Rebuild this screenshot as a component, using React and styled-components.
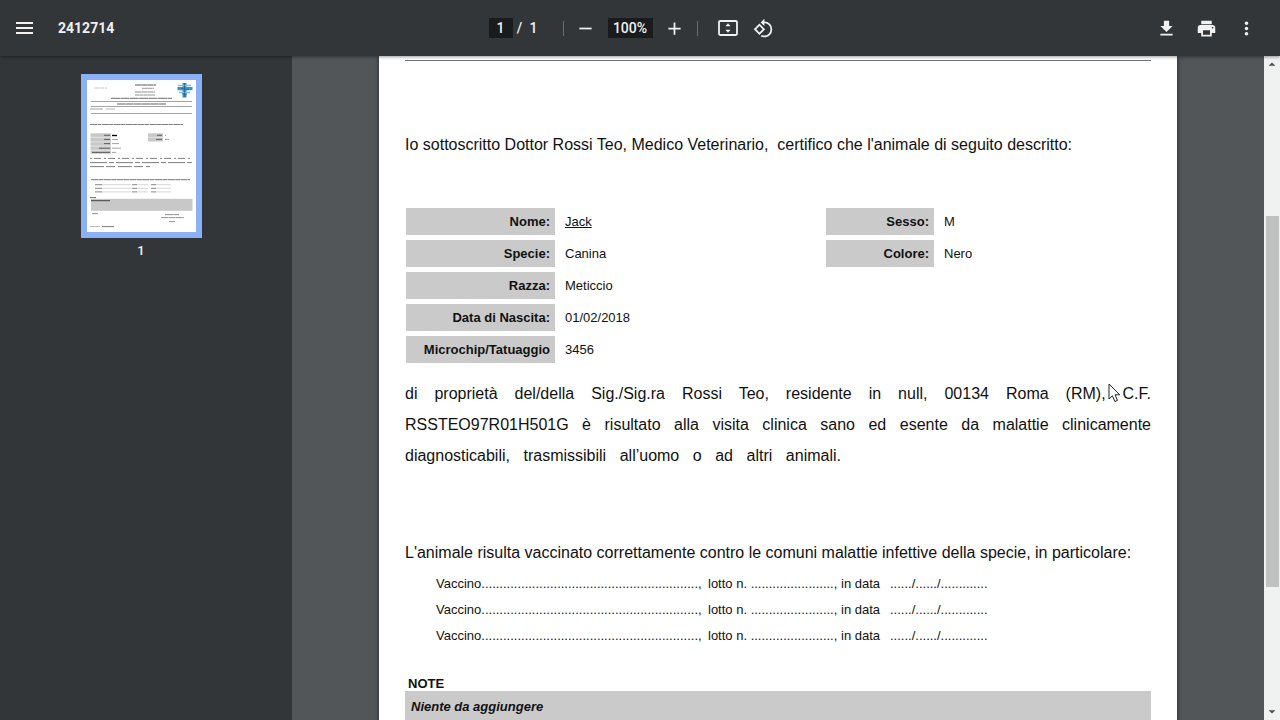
import React, {useState} from "react";
import styled, {createGlobalStyle, css} from "styled-components";
import {
    MdRemove,
    MdAdd,
    MdRotate90DegreesCcw,
    MdDownload,
    MdPrint,
    MdMoreVert,
    MdArrowDropUp,
    MdArrowDropDown,
} from "react-icons/md";

const GlobalStyle = createGlobalStyle`
  * { box-sizing: border-box; }
  body { margin: 0; background: #525659; overflow: hidden; }
`;

const Viewer = styled.div`
  display: flex;
  flex-direction: column;
  height: 100vh;
  font-family: Roboto, sans-serif;
`;

const Toolbar = styled.header`
  position: relative;
  z-index: 1;
  flex: none;
  display: grid;
  grid-template-columns: 1fr auto 1fr;
  align-items: center;
  height: 56px;
  padding: 0 18px 0 8px;
  background: #323639;
  color: #f1f1f1;
  font-size: 14px;
  font-weight: 500;
  box-shadow: 0 1px 3px rgba(0, 0, 0, 0.4);
`;

const ToolGroup = styled.div`
  display: flex;
  align-items: center;
  justify-content: ${(p) => (p.$end ? "flex-end" : "flex-start")};
  gap: ${(p) => p.$gap || 0}px;
`;

const PageTools = styled(ToolGroup)`
  padding-right: 2px;
`;

const FileName = styled.h1`
  margin: 0;
  font-size: 14px;
  font-weight: 700;
`;

const IconButton = styled.button`
  display: flex;
  align-items: center;
  justify-content: center;
  width: 32px;
  height: 32px;
  padding: 0;
  border: 0;
  background: none;
  color: inherit;
  cursor: pointer;
`;

const ToolInput = styled.input`
  width: ${(p) => p.$width}px;
  height: 20px;
  margin: ${(p) => (p.$spaced ? "0 6px" : "0")};
  padding: 0;
  border: 0;
  background: #191b1c;
  color: inherit;
  font: inherit;
  text-align: center;
`;

const PageText = styled.span`
  width: 14px;
  text-align: center;
`;

const Divider = styled.span`
  width: 1px;
  height: 15px;
  margin: ${(p) => (p.$wideLeft ? "0 6px 0 22px" : "0 14px 0 6px")};
  background: #6a6e71;
`;

const Body = styled.div`
  display: flex;
  flex: 1;
  min-height: 0;
`;

const Sidebar = styled.nav`
  flex: none;
  display: flex;
  flex-direction: column;
  align-items: center;
  width: 292px;
  padding: 18px 10px 0 0;
  background: #323639;
`;

const ThumbButton = styled.button`
  display: flex;
  flex-direction: column;
  align-items: center;
  gap: 4px;
  padding: 0;
  border: 0;
  background: none;
  color: #f1f1f1;
  font: 500 13px/18px Roboto, sans-serif;
`;

const ThumbFrame = styled.span`
  display: flex;
  border: 6px solid #8ab0f5;
  background: #fff;
`;

const Content = styled.main`
  flex: 1;
  min-width: 0;
  display: flex;
  justify-content: center;
  align-items: flex-start;
  overflow: hidden;
  background: #525659;
`;

const Sheet = styled.article`
  width: 100%;
  max-width: 798px;
  padding: 4px 26px 80px;
  background: #fff;
  color: #111;
  font-family: "Liberation Sans", Arial, sans-serif;
  font-size: 16px;
  line-height: 20px;
  box-shadow: 0 0 4px rgba(0, 0, 0, 0.6);
`;

const Rule = styled.hr`
  height: 1px;
  margin: 0 0 74px;
  border: 0;
  background: #777;
`;

const Paragraph = styled.p`
  margin: 0;
  white-space: pre-wrap;
`;

const Statement = styled.p`
  margin: 10px 0 72px;
  line-height: 31px;
`;

const StatementLine = styled.span`
  display: block;
  max-width: ${(p) => (p.$short ? "436px" : "none")};
  text-align: justify;
  text-align-last: justify;
`;

const Details = styled.div`
  display: grid;
  grid-template-columns: 420px 1fr;
  align-items: start;
  margin-top: 48px;
  padding-left: 1px;
`;

const cell = css`
  height: 27px;
  padding: 1px 0 0;
  font-size: 13px;
  line-height: 20px;
`;

const DetailTable = styled.table`
  border-spacing: 0 5px;
`;

const Label = styled.th`
  ${cell}
  width: ${(p) => p.$width}px;
  padding-right: 5px;
  background: #cbcaca;
  text-align: right;
`;

const Value = styled.td`
  ${cell}
  padding-left: 10px;
  text-decoration: ${(p) => (p.$underline ? "underline" : "none")};
`;

const VaccineList = styled.ul`
  margin: 8px 0 28px;
  padding: 0 0 0 31px;
  list-style: none;
  font-size: 13px;
  line-height: 26px;
`;

const Vaccine = styled.li`
  display: grid;
  grid-template-columns: 272px 133px 49px auto;
  justify-content: start;
  white-space: nowrap;
`;

const NoteTitle = styled.h2`
  margin: 0;
  padding-left: 3px;
  font-size: 13px;
  line-height: 14px;
`;

const NoteBox = styled.div`
  min-height: 90px;
  padding: 6px;
  background: #cbcaca;
  font-size: 13px;
  font-style: italic;
  font-weight: 700;
`;

const Scrollbar = styled.div`
  flex: none;
  display: flex;
  flex-direction: column;
  align-items: center;
  width: 16px;
  background: #eff2f1;
  color: #4a4d4e;
`;

const ScrollArrow = styled.button`
  display: flex;
  align-items: center;
  justify-content: center;
  width: 16px;
  height: 17px;
  padding: 0;
  border: 0;
  background: none;
  color: inherit;
`;

const ScrollSpace = styled.div`
  flex: ${(p) => p.$size};
`;

const ScrollThumb = styled.div`
  flex: 371;
  width: 13px;
  background: #bfc2c1;
`;

const Pointer = styled.svg`
  position: absolute;
  z-index: 2;
  left: 1108px;
  top: 383px;
  pointer-events: none;
`;

const animalLeft = [
    {label: "Nome:", value: "Jack", underline: true},
    {label: "Specie:", value: "Canina"},
    {label: "Razza:", value: "Meticcio"},
    {label: "Data di Nascita:", value: "01/02/2018"},
    {label: "Microchip/Tatuaggio", value: "3456"},
];

const animalRight = [
    {label: "Sesso:", value: "M"},
    {label: "Colore:", value: "Nero"},
];

const dots = (n) => ".".repeat(n);

const MenuIcon = () => (
    <svg width="17" height="12" viewBox="0 0 17 12" fill="currentColor">
        <path d="M0 0h17v2H0zM0 5h17v2H0zM0 10h17v2H0z"/>
    </svg>
);

const FitIcon = () => (
    <svg width="20" height="16" viewBox="0 0 20 16" fill="currentColor">
        <rect x="1" y="1" width="18" height="14" rx="1.2" fill="none" stroke="currentColor" strokeWidth="1.8"/>
        <path d="M10 3.2l2.6 3H7.4zM10 12.8l2.6-3H7.4z"/>
    </svg>
);

// x, y, width, dash pattern of each text line in the preview
const previewLines = [
    [7, 8, 13, "5 .5", 0.3],
    [48, 5, 21, "6 .3", 0.9],
    [55, 8.3, 12, "5 .3", 0.55],
    [48, 12, 20, "6 .3", 0.6],
    [48, 15, 20, "4 .3", 0.6],
    [24, 18.3, 61, "9 .4", 0.8],
    [30, 24, 49, "8 .3", 0.85],
    [3, 29, 13, "13 0", 0.5],
    [19, 29, 9, "9 0", 0.4],
    [3, 44.5, 93, "7 .4 4 .5", 0.7],
    [3, 78.4, 102, "2 2 7 3", 0.7],
    [3, 82.6, 102, "17 2 5 2", 0.7],
    [3, 86.6, 60, "14 2 9 3", 0.7],
    [4, 99.7, 99, "7 .4 5 .4", 0.75],
    [3, 117.6, 6, "6 0", 0.8],
    [4, 120.7, 19, "19 0", 1],
    [5, 133.6, 6, "6 0", 0.6],
    [78, 134.6, 14, "8 .4", 0.6],
    [74, 137.6, 23, "7 .3", 0.6],
    [82, 141.6, 6, "6 0", 0.6],
    [3, 146.6, 10, "4 .4", 0.4],
    [15, 146.6, 12, "12 0", 0.7],
];

const Preview = () => (
    <svg width="109" height="152" viewBox="0 0 109 152">
        <g fill="#c8c8c8">
            <rect x="3.5" y="53.3" width="20.5" height="20.5"/>
            <rect x="61" y="53.3" width="15" height="8.2"/>
            <rect x="4" y="118.8" width="101.5" height="12"/>
        </g>
        <g stroke="#fff" strokeWidth=".5">
            <path d="M3 57.4h74M3 61.9h22M3 66.1h22M3 70.2h22"/>
        </g>
        <g stroke="#666" strokeWidth=".6">
            <path d="M4 21.5h101M4 26.5h101M4 33.5h101"/>
        </g>
        <g stroke="#333" strokeWidth=".9">
            {previewLines.map(([x, y, width, dash, opacity]) => (
                <path key={`${x}-${y}`} d={`M${x} ${y}h${width}`} strokeDasharray={dash} opacity={opacity}/>
            ))}
            <path d="M17 55.3h6M17 59.4h6M17 63.6h6M12 68.2h11M5 72.4h18M70 55.3h5M69 59.4h6" opacity=".8"/>
            <path d="M25 55.5h5" stroke="#000" strokeWidth="1.4"/>
            <path d="M25 59.4h6M25 63.6h7M25 68.2h9M25 72.4h4M78 55.3h1M78 59.4h4" opacity=".5"/>
        </g>
        {[104.7, 108.3, 111.9].map((y) => (
            <g key={y} stroke="#444" strokeWidth=".7">
                <path d={`M8 ${y}h7M45 ${y}h5M64 ${y}h5`} opacity=".9"/>
                <path d={`M15 ${y}h29M50 ${y}h11M69 ${y}h15`} opacity=".3"/>
            </g>
        ))}
        <path d="M95.5 3h4v4h6v3.2h-6v7.3h-4v-7.3h-5V7h5z" fill="#3b93c6"/>
        <path d="M91 5.5h13M92 12.5h11" stroke="#7cc0e2" strokeWidth="1.3"/>
        <path d="M97.6 3v14M94 9c2-2 5 2 8 0M95 14c2-1 3 1 5 0" fill="none" stroke="#1d5d88" strokeWidth=".7"/>
    </svg>
);

const AnimalTable = ({rows, width}) => (
    <DetailTable>
        <tbody>
        {rows.map((row) => (
            <tr key={row.label}>
                <Label scope="row" $width={width}>{row.label}</Label>
                <Value $underline={row.underline}>{row.value}</Value>
            </tr>
        ))}
        </tbody>
    </DetailTable>
);

const App = () => {
    const [page, setPage] = useState("1");
    const [zoom, setZoom] = useState("100%");

    return (
        <Viewer>
            <GlobalStyle/>
            <Toolbar>
                <ToolGroup $gap={18}>
                    <IconButton aria-label="Menu"><MenuIcon/></IconButton>
                    <FileName>2412714</FileName>
                </ToolGroup>
                <PageTools>
                    <ToolInput
                        $width={24}
                        aria-label="Pagina"
                        value={page}
                        onChange={(e) => setPage(e.target.value)}
                    />
                    <PageText>/</PageText>
                    <PageText>1</PageText>
                    <Divider $wideLeft/>
                    <IconButton aria-label="Riduci"><MdRemove size={21}/></IconButton>
                    <ToolInput
                        $width={45}
                        $spaced
                        aria-label="Zoom"
                        value={zoom}
                        onChange={(e) => setZoom(e.target.value)}
                    />
                    <IconButton aria-label="Ingrandisci"><MdAdd size={21}/></IconButton>
                    <Divider/>
                    <ToolGroup $gap={4}>
                        <IconButton aria-label="Adatta alla pagina"><FitIcon/></IconButton>
                        <IconButton aria-label="Ruota"><MdRotate90DegreesCcw size={21}/></IconButton>
                    </ToolGroup>
                </PageTools>
                <ToolGroup $end $gap={8}>
                    <IconButton aria-label="Scarica"><MdDownload size={21}/></IconButton>
                    <IconButton aria-label="Stampa"><MdPrint size={21}/></IconButton>
                    <IconButton aria-label="Altro"><MdMoreVert size={21}/></IconButton>
                </ToolGroup>
            </Toolbar>
            <Body>
                <Sidebar>
                    <ThumbButton>
                        <ThumbFrame><Preview/></ThumbFrame>
                        1
                    </ThumbButton>
                </Sidebar>
                <Content>
                    <Sheet>
                        <Rule/>
                        <Paragraph>
                            {"Io sottoscritto Dottor Rossi Teo, Medico Veterinario,  certifico che l'animale di seguito descritto:"}
                        </Paragraph>
                        <Details>
                            <AnimalTable rows={animalLeft} width={149}/>
                            <AnimalTable rows={animalRight} width={108}/>
                        </Details>
                        <Statement>
                            <StatementLine>
                                di proprietà del/della Sig./Sig.ra Rossi Teo, residente in null, 00134 Roma (RM), C.F.
                            </StatementLine>
                            <StatementLine>
                                RSSTEO97R01H501G è risultato alla visita clinica sano ed esente da malattie clinicamente
                            </StatementLine>
                            <StatementLine $short>
                                diagnosticabili, trasmissibili all’uomo o ad altri animali.
                            </StatementLine>
                        </Statement>
                        <Paragraph>
                            L'animale risulta vaccinato correttamente contro le comuni malattie infettive della specie, in particolare:
                        </Paragraph>
                        <VaccineList>
                            {[1, 2, 3].map((n) => (
                                <Vaccine key={n}>
                                    <span>Vaccino{dots(60)},</span>
                                    <span>lotto n. {dots(23)},</span>
                                    <span>in data</span>
                                    <span>{dots(6)}/{dots(6)}/{dots(13)}</span>
                                </Vaccine>
                            ))}
                        </VaccineList>
                        <NoteTitle>NOTE</NoteTitle>
                        <NoteBox>Niente da aggiungere</NoteBox>
                    </Sheet>
                </Content>
                <Scrollbar>
                    <ScrollArrow aria-label="Su"><MdArrowDropUp size={19}/></ScrollArrow>
                    <ScrollSpace $size={143}/>
                    <ScrollThumb/>
                    <ScrollSpace $size={116}/>
                    <ScrollArrow aria-label="Giù"><MdArrowDropDown size={19}/></ScrollArrow>
                </Scrollbar>
            </Body>
            <Pointer width="13" height="20" viewBox="0 0 13 20">
                <path
                    d="M1 1v15l3.4-3.2 2.5 5.7 2.6-1.1L7 11.8h4.7z"
                    fill="#fff"
                    stroke="#222"
                    strokeWidth="1"
                />
            </Pointer>
        </Viewer>
    );
};

export default App;
